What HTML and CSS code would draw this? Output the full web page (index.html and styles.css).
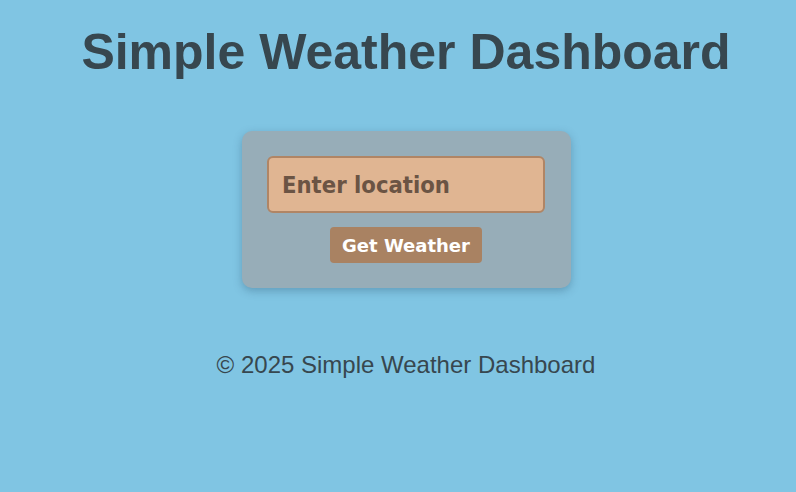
FILE: index.html
```html
<!DOCTYPE html>
<html lang="en">
<head>
<meta charset="utf-8">
<title>Simple Weather Dashboard</title>
<link rel="stylesheet" href="styles.css">
</head>
<body>
<header class="header">
  <h1 class="title">Simple Weather Dashboard</h1>
</header>
<main class="main">
  <section class="card">
    <input class="location" type="text" placeholder="Enter location">
    <button class="btn" type="button">Get Weather</button>
  </section>
</main>
<footer class="footer">&copy; 2025 Simple Weather Dashboard</footer>
</body>
</html>
```
FILE: styles.css
```css
html, body {
  margin: 0;
  height: 100%;
}
body {
  background: #80c5e3;
  padding-left: 16px;
  font-family: "Liberation Sans", Arial, sans-serif;
  color: #37474f;
}
.header {
  display: flex;
  justify-content: center;
  padding-top: 23px;
}
.title {
  margin: 0;
  font-size: 50px;
  font-weight: bold;
  line-height: 58px;
  color: #37474f;
}
.main {
  display: flex;
  justify-content: center;
  margin-top: 50px;
}
.card {
  width: 329px;
  height: 157px;
  box-sizing: border-box;
  background: #97adb8;
  border-radius: 10px;
  box-shadow: 0 3px 8px rgba(40, 80, 110, 0.35);
  display: flex;
  flex-direction: column;
  align-items: center;
  padding-top: 25px;
}
.location {
  width: 278px;
  height: 57px;
  box-sizing: border-box;
  background: #e0b592;
  border: 2px solid #b08565;
  border-radius: 6px;
  padding: 0 13px;
  font-family: "DejaVu Sans Condensed", "DejaVu Sans", Verdana, sans-serif;
  font-stretch: condensed;
  font-weight: bold;
  font-size: 23.6px;
  color: #6b5444;
  outline: none;
}
.location::placeholder {
  color: #6b5444;
  opacity: 1;
}
.btn {
  margin-top: 14px;
  width: 152px;
  height: 36px;
  background: #a98262;
  border: none;
  border-radius: 4px;
  color: #ffffff;
  font-family: "DejaVu Sans", Verdana, sans-serif;
  font-weight: bold;
  font-size: 18px;
  padding: 0;
}
.footer {
  display: flex;
  justify-content: center;
  margin-top: 63px;
  font-size: 24px;
  line-height: 28px;
  color: #37474f;
}
```
